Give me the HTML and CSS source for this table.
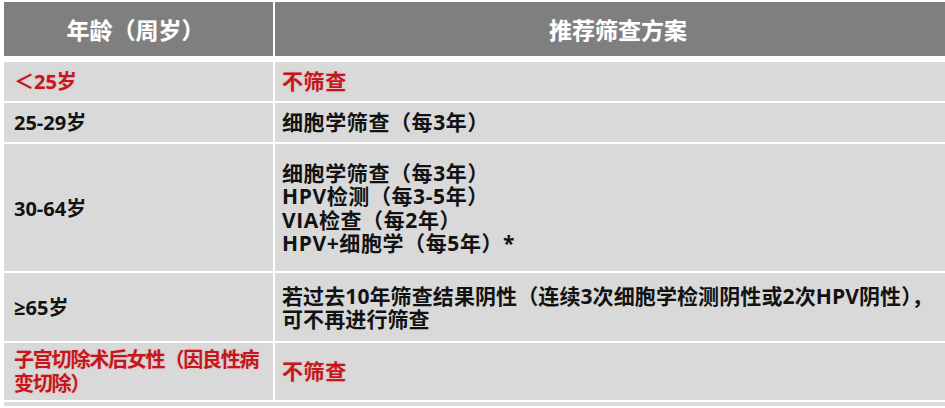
FILE: index.html
```html
<!DOCTYPE html>
<html lang="zh-CN">
<head>
<meta charset="utf-8">
<title>宫颈癌筛查方案</title>
<link rel="stylesheet" href="styles.css">
</head>
<body>
<div class="table">
  <div class="th th-age">年龄（周岁）</div>
  <div class="th th-plan">推荐筛查方案</div>

  <div class="td age r1 red">＜25岁</div>
  <div class="td plan r1 red">不筛查</div>

  <div class="td age r2">25-29岁</div>
  <div class="td plan r2">细胞学筛查（每3年）</div>

  <div class="td age r3">30-64岁</div>
  <div class="td plan r3">细胞学筛查（每3年）<br>HPV检测（每3-5年）<br>VIA检查（每2年）<br>HPV+细胞学（每5年）*</div>

  <div class="td age r4">≥65岁</div>
  <div class="td plan r4 nowrap">若过去10年筛查结果阴性（连续3次细胞学检测阴性或2次HPV阴性），<br>可不再进行筛查</div>

  <div class="td age r5 red tight nowrap">子宫切除术后女性（因良性病<br>变切除）</div>
  <div class="td plan r5 red">不筛查</div>
</div>
</body>
</html>
```

FILE: styles.css
```css
html, body {
  margin: 0;
  padding: 0;
  background: #ffffff;
}

body {
  width: 945px;
  height: 408px;
  overflow: hidden;
  font-family: "Open Sans", "Noto Sans CJK SC", sans-serif;
  font-weight: 700;
}

.table {
  display: grid;
  grid-template-columns: 269px 1fr;
  grid-template-rows: 56px 41px 39px 127px 68px 57px;
  column-gap: 2px;
  row-gap: 2px;
  margin: 2px 0 0 4px;
  padding-bottom: 2px;
  background: #ffffff;
  border-bottom: 4px solid #dcdcdc;
}

.th {
  background: #7f7f7f;
  color: #ffffff;
  font-size: 23px;
  display: flex;
  align-items: center;
  justify-content: center;
  margin-bottom: 2px;
  text-shadow: 0 0 1px rgba(255, 255, 255, 0.4);
}

.th-age {
  padding-right: 6px;
}

.th-plan {
  padding-left: 16px;
}

.td {
  background: #d9d9d9;
  color: #121212;
  line-height: 23.4px;
  display: flex;
  align-items: center;
}

.age {
  font-size: 20px;
  padding-left: 10px;
  padding-right: 4px;
}

.plan {
  font-size: 21px;
  letter-spacing: 0.6px;
  padding-left: 7px;
}

.r1 {
  margin-top: 2px;
  padding-top: 1px;
}

.r3 {
  padding-top: 2px;
}

.r4 {
  padding-top: 2px;
  letter-spacing: 0.1px;
}

.r5 {
  padding-top: 0;
}

.tight {
  letter-spacing: -1.2px;
  line-height: 24px;
}

.nowrap {
  white-space: nowrap;
}

.red {
  color: #c4161c;
  text-shadow: 0 0 2px rgba(235, 120, 120, 0.45);
}
```
